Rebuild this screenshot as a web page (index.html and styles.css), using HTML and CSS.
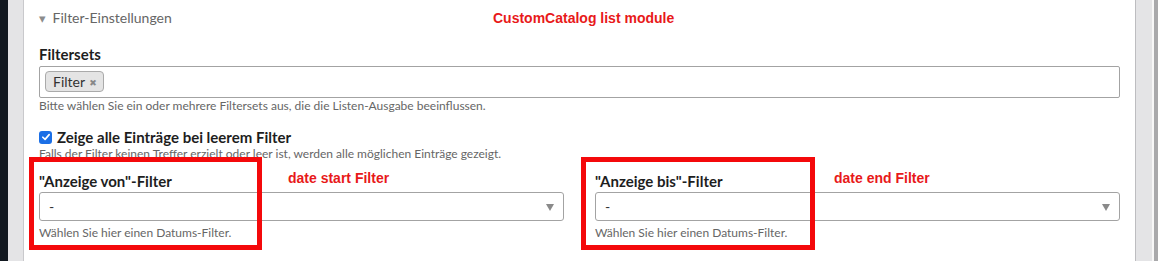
FILE: index.html
```html
<!DOCTYPE html>
<html lang="de">
<head>
    <meta charset="UTF-8">
    <title>CustomCatalog list module</title>
    <link rel="stylesheet" href="styles.css">
</head>
<body>
    <div class="rail-dark"></div>
    <div class="rail-gray"></div>
    <div class="panel">
        <div class="legend">
            <span class="caret">&#9662;</span> Filter-Einstellungen
            <span class="note note-title">CustomCatalog list module</span>
        </div>

        <div class="field">
            <label class="label">Filtersets</label>
            <div class="tags">
                <span class="tag">Filter <b class="tag-x">&#10006;</b></span>
            </div>
            <p class="help">Bitte wählen Sie ein oder mehrere Filtersets aus, die die Listen-Ausgabe beeinflussen.</p>
        </div>

        <div class="field">
            <label class="check-row">
                <span class="checkbox">
                    <svg viewBox="0 0 12 12" width="10" height="10"><path d="M2.2 6.3 L4.9 8.9 L9.8 3.2" fill="none" stroke="#fff" stroke-width="2" stroke-linecap="round" stroke-linejoin="round"/></svg>
                </span>
                Zeige alle Einträge bei leerem Filter
            </label>
            <p class="help help-check">Falls der Filter keinen Treffer erzielt oder leer ist, werden alle möglichen Einträge gezeigt.</p>
        </div>

        <div class="cols">
            <div class="col">
                <label class="label">"Anzeige von"-Filter</label>
                <div class="select">- <span class="arrow"></span></div>
                <p class="help help-date">Wählen Sie hier einen Datums-Filter.</p>
                <div class="mark mark-left"></div>
                <span class="note note-start">date start Filter</span>
            </div>
            <div class="col">
                <label class="label">"Anzeige bis"-Filter</label>
                <div class="select">- <span class="arrow"></span></div>
                <p class="help help-date">Wählen Sie hier einen Datums-Filter.</p>
                <div class="mark mark-right"></div>
                <span class="note note-end">date end Filter</span>
            </div>
        </div>
    </div>
    <div class="rail-right"></div>
    <div class="rail-edge"></div>
    <div class="rail-scroll"></div>
</body>
</html>
```

FILE: styles.css
```css
*{
    box-sizing: border-box;
    margin: 0;
}
body{
    display: flex;
    height: 261px;
    overflow: hidden;
    font-family: Lato, "Open Sans", sans-serif;
    color: #222;
    background: #fff;
}
.rail-dark{
    width: 8px;
    background: #121820;
}
.rail-gray{
    width: 16px;
    background: #e4e4e6;
    border-right: 1px solid #c9c9cc;
}
.panel{
    flex: 1;
    padding: 0 15px;
    border-right: 1px solid #bdbdc0;
}
.rail-right{
    width: 16px;
    background: #e4e4e6;
}
.rail-edge{
    width: 2px;
    background: #f7f7f7;
}
.rail-scroll{
    width: 4px;
    background: #a9a9ab;
}

.legend{
    position: relative;
    margin-top: 8px;
    height: 20px;
    line-height: 20px;
    font-size: 14px;
    color: #666;
}
.caret{
    display: inline-block;
    width: 10px;
    font-size: 13px;
    color: #8c8c8c;
}
.note{
    position: absolute;
    font-family: "Liberation Sans", Arial, sans-serif;
    font-weight: bold;
    font-size: 14px;
    line-height: 18px;
    color: #e8191a;
    white-space: nowrap;
}
.note-title{
    left: 454px;
    top: 1px;
}

.field{
    margin-top: 16px;
}
.field + .field{
    margin-top: 14px;
}
.label{
    display: block;
    font-weight: bold;
    font-size: 15px;
    line-height: 20px;
    color: #1e1e1e;
}
.tags{
    margin-top: 2px;
    height: 32px;
    border: 1px solid #a3a3a3;
    border-radius: 2px;
    padding: 4px 5px;
}
.tag{
    display: inline-block;
    height: 21px;
    line-height: 19px;
    padding: 0 6px 0 7px;
    font-size: 14px;
    color: #333;
    background: #e4e4e4;
    border: 1px solid #aaa;
    border-radius: 4px;
}
.tag-x{
    margin-left: 1px;
    font-family: "DejaVu Sans", sans-serif;
    font-size: 9px;
    color: #888;
    vertical-align: 1px;
}
.help{
    font-size: 12px;
    line-height: 16px;
    color: #666;
}

.check-row{
    display: flex;
    align-items: center;
    gap: 5px;
    height: 18px;
    font-weight: bold;
    font-size: 15px;
    color: #1e1e1e;
}
.checkbox{
    display: flex;
    align-items: center;
    justify-content: center;
    width: 13px;
    height: 13px;
    border-radius: 3px;
    background: #1b6fe6;
}

.cols{
    display: grid;
    grid-template-columns: 1fr 1fr;
    column-gap: 31px;
    margin-top: 9px;
}
.col{
    position: relative;
}
.select{
    position: relative;
    margin-top: 1px;
    height: 29px;
    line-height: 27px;
    padding-left: 9px;
    font-size: 14px;
    color: #333;
    border: 1px solid #a3a3a3;
    border-radius: 3px;
}
.arrow{
    position: absolute;
    right: 9px;
    top: 11px;
    border-left: 4.5px solid transparent;
    border-right: 4.5px solid transparent;
    border-top: 7px solid #8a8a8a;
}
.help-date{
    margin-top: 4px;
}
.mark{
    position: absolute;
    top: -14px;
    height: 93px;
    border: 5px solid #f4090b;
}
.mark-left{
    left: -10px;
    width: 233px;
}
.mark-right{
    left: -14px;
    width: 234px;
}
.note-start{
    left: 249px;
    top: -2px;
}
.note-end{
    left: 239px;
    top: -2px;
}
```
